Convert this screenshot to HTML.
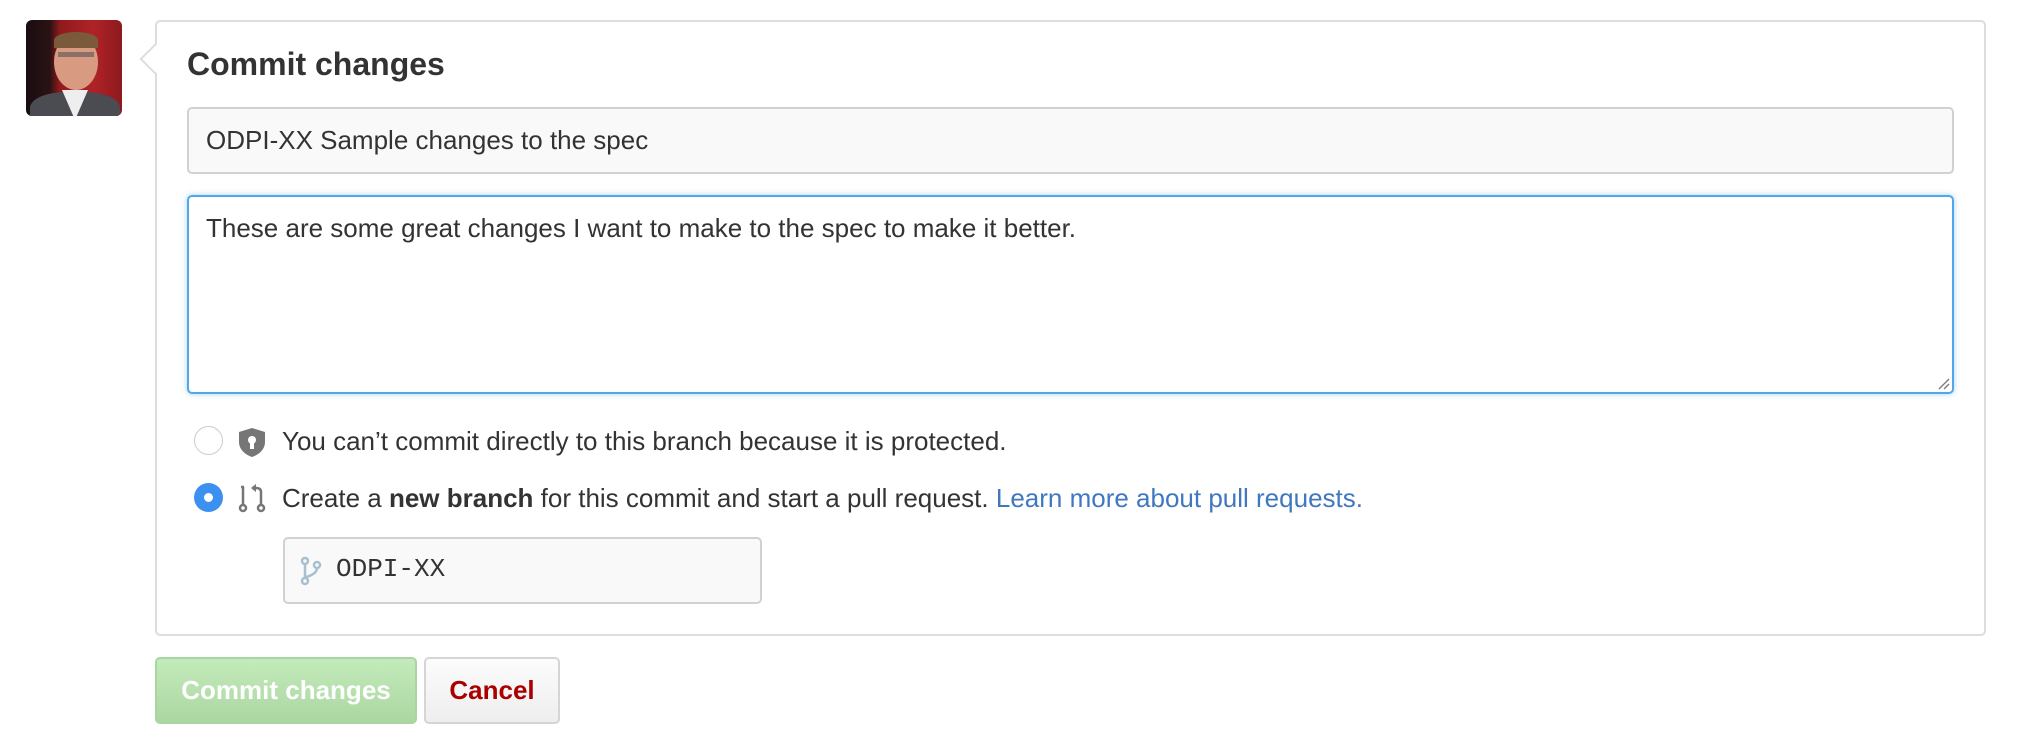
<!DOCTYPE html>
<html><head><meta charset="utf-8"><style>
*{box-sizing:border-box;margin:0;padding:0}
body{width:2020px;height:746px;background:#fff;font-family:"Liberation Sans",Arial,sans-serif;color:#333;position:relative;overflow:hidden}
.abs{position:absolute}
#avatar{left:26px;top:20px;width:96px;height:96px;border-radius:6px;overflow:hidden;background:linear-gradient(90deg,#1a0d10 0,#2a1214 25%,#8e1a1c 35%,#b02326 70%,#8c1a1e 100%)}
#box{left:155px;top:20px;width:1831px;height:616px;border:2px solid #ddd;border-radius:5px;background:#fff}
#ptr{left:144px;top:48px;width:22px;height:22px;background:#fff;border-left:2px solid #ddd;border-bottom:2px solid #ddd;transform:rotate(45deg)}
h1{position:absolute;left:187px;top:46px;font-size:32px;font-weight:bold;color:#333}
#inp{left:187px;top:107px;width:1767px;height:67px;background:#f9f9f9;border:2px solid #d1d1d1;border-radius:5px;font-size:26px;padding-left:17px;line-height:63px;color:#333}
#ta{left:187px;top:195px;width:1767px;height:199px;border:2px solid #51a7e8;border-radius:5px;box-shadow:0 0 6px rgba(81,167,232,.5);font-size:26px;padding:16px 17px;color:#333}
.radio{width:29px;height:29px;border-radius:50%}
.t{font-size:26px;color:#333;white-space:nowrap}
a{color:#4078c0;text-decoration:none}
#br{left:283px;top:537px;width:479px;height:67px;background:#f9f9f9;border:2px solid #d1d1d1;border-radius:5px}
.btn{top:657px;height:67px;border-radius:5px;font-size:26px;font-weight:bold;text-align:center;line-height:63px}
</style></head><body>
<div id="avatar" class="abs">
 <div class="abs" style="left:28px;top:14px;width:44px;height:56px;border-radius:50%;background:#d99a82"></div>
 <div class="abs" style="left:28px;top:12px;width:44px;height:16px;border-radius:50% 50% 0 0;background:#7a5a3a"></div>
 <div class="abs" style="left:32px;top:32px;width:36px;height:5px;background:#555;opacity:.6"></div>
 <div class="abs" style="left:4px;top:72px;width:90px;height:40px;border-radius:40% 40% 0 0;background:#4a4c52"></div>
 <div class="abs" style="left:36px;top:70px;width:26px;height:30px;background:#eee;clip-path:polygon(0 0,100% 0,50% 100%)"></div>
</div>
<div id="box" class="abs"></div>
<div id="ptr" class="abs"></div>
<h1>Commit changes</h1>
<div id="inp" class="abs">ODPI-XX Sample changes to the spec</div>
<div id="ta" class="abs">These are some great changes I want to make to the spec to make it better.
<svg class="abs" style="right:2px;bottom:2px" width="14" height="14" viewBox="0 0 14 14"><path d="M13 3L3 13M13 8L8 13" stroke="#777" stroke-width="1.3"/></svg></div>

<div class="abs radio" style="left:194px;top:426px;border:1.5px solid #ccc;background:#fff"></div>
<svg class="abs" style="left:238px;top:427px" width="28" height="31" viewBox="0 0 28 31"><path d="M14 1L27 5V15C27 23 20 28 14 30C8 28 1 23 1 15V5Z" fill="#767676"/><circle cx="14" cy="13" r="4" fill="#fff"/><rect x="12" y="14" width="4" height="8" fill="#fff"/></svg>
<div class="abs t" style="left:282px;top:426px">You can’t commit directly to this branch because it is protected.</div>

<div class="abs radio" style="left:194px;top:483px;background:#3b90f0"></div>
<div class="abs" style="left:204px;top:493px;width:9px;height:9px;border-radius:50%;background:#fff"></div>
<svg class="abs" style="left:238px;top:483px" width="30" height="30" viewBox="0 0 30 30"><g fill="none" stroke="#767676" stroke-width="2.5"><circle cx="5" cy="25" r="3"/><circle cx="23" cy="25" r="3"/><path d="M5 22V4M3 4H6"/><path d="M23 22V9Q23 5 18 5H14"/></g><path d="M13 5L18 1V9Z" fill="#767676"/></svg>
<div class="abs t" style="left:282px;top:483px">Create a <b>new branch</b> for this commit and start a pull request. <a>Learn more about pull requests.</a></div>

<div id="br" class="abs"></div>
<svg class="abs" style="left:300px;top:556px" width="22" height="30" viewBox="0 0 22 30"><g fill="none" stroke="#a7c0cf" stroke-width="2.5"><circle cx="5" cy="5" r="3"/><circle cx="17" cy="9" r="3"/><circle cx="5" cy="25" r="3"/><path d="M5 8V22M17 12Q17 18 6 21"/></g></svg>
<div class="abs" style="left:336px;top:554px;font-family:'Liberation Mono','DejaVu Sans Mono',monospace;font-size:26px;color:#333">ODPI-XX</div>

<div class="abs btn" style="left:155px;width:262px;background:linear-gradient(#c3ebbb,#abd6a1);border:2px solid #a9d6a0;color:#fff">Commit changes</div>
<div class="abs btn" style="left:424px;width:136px;background:linear-gradient(#fcfcfc,#eee);border:2px solid #d5d5d5;color:#a00">Cancel</div>
</body></html>
